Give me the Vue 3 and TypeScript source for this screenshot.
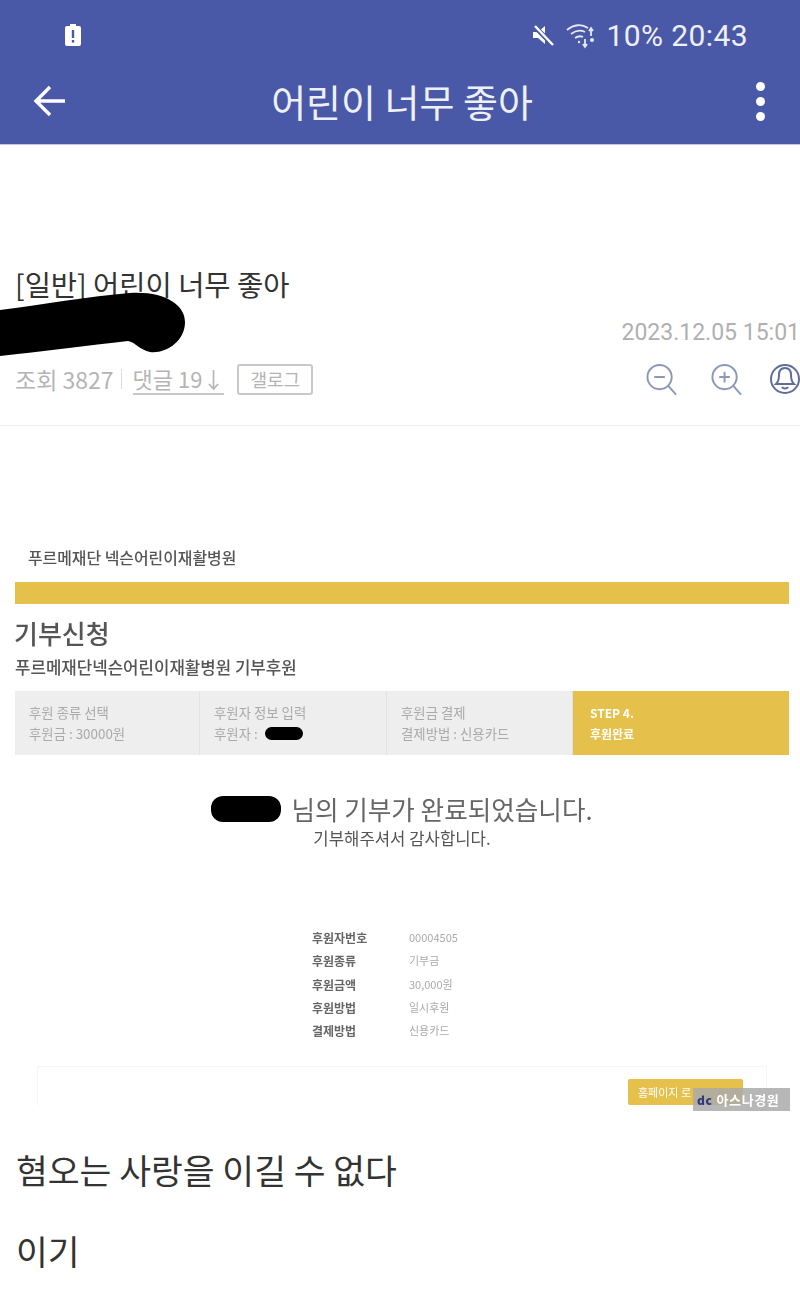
<script setup lang="ts">
const steps = [
  { title: "후원 종류 선택", sub: "후원금 : 30000원" },
  { title: "후원자 정보 입력", sub: "후원자 :" },
  { title: "후원금 결제", sub: "결제방법 : 신용카드" },
];

const receipt = [
  { label: "후원자번호", value: "00004505" },
  { label: "후원종류", value: "기부금" },
  { label: "후원금액", value: "30,000원" },
  { label: "후원방법", value: "일시후원" },
  { label: "결제방법", value: "신용카드" },
];
</script>

<template>
  <div class="page">
    <header class="appbar">
      <div class="status">
        <svg class="battery" width="18" height="24" viewBox="0 0 18 24">
          <path d="M6 1h6v2h3a2 2 0 0 1 2 2v16a2 2 0 0 1-2 2H3a2 2 0 0 1-2-2V5a2 2 0 0 1 2-2h3z" fill="#fff" />
          <rect x="7.8" y="7" width="2.4" height="8" fill="#4a58a8" />
          <rect x="7.8" y="17" width="2.4" height="2.6" fill="#4a58a8" />
        </svg>
        <div class="status-right">
          <svg width="24" height="24" viewBox="0 0 24 24">
            <path d="M2 9h5l7-6v18l-7-6H2z" fill="#fff" />
            <path d="M3 3l19 19" stroke="#4a58a8" stroke-width="5" />
            <path d="M4 3l18 19" stroke="#fff" stroke-width="2.4" />
          </svg>
          <svg width="32" height="28" viewBox="0 0 32 28" fill="none" stroke="#e6e8f4" stroke-width="1.8">
            <path d="M2 9c7-6 15-6 21-2" />
            <path d="M6 13c5-4 10-4 14-2" />
            <path d="M10 17c3-2 6-2 8-1" />
            <circle cx="14" cy="21" r="1.2" fill="#e6e8f4" stroke="none" />
            <path d="M20 26v-8M26 15v-8M24 10l2-3 2 3M18 23l2 3 2-3" />
            <circle cx="27" cy="19" r="2" fill="#e6e8f4" stroke="none" />
          </svg>
          <span class="status-text">10% 20:43</span>
        </div>
      </div>
      <div class="toolbar">
        <svg width="36" height="36" viewBox="0 0 36 36" fill="none" stroke="#fff" stroke-width="3.4">
          <path d="M33 18H4M18 4L4 18l14 14" />
        </svg>
        <h1>어린이 너무 좋아</h1>
        <span class="dots"><i></i><i></i><i></i></span>
      </div>
    </header>

    <section class="post-head">
      <h2>[일반] 어린이 너무 좋아</h2>
      <div class="date">2023.12.05 15:01</div>
      <div class="meta">
        <span class="views">조회 3827</span>
        <span class="sep"></span>
        <span class="comments">댓글 19↓</span>
        <span class="tag">갤로그</span>
        <div class="tools">
          <svg width="34" height="34" viewBox="0 0 34 34" fill="none" stroke="#8c98b8" stroke-width="2">
            <circle cx="15" cy="15" r="12.5" />
            <path d="M9.5 15h11M24 24l8 9" />
          </svg>
          <svg width="34" height="34" viewBox="0 0 34 34" fill="none" stroke="#8c98b8" stroke-width="2">
            <circle cx="15" cy="15" r="12.5" />
            <path d="M9.5 15h11M15 9.5v11M24 24l8 9" />
          </svg>
          <svg class="bell" width="30" height="34" viewBox="0 0 30 34" fill="none" stroke="#5f6d9c" stroke-width="2">
            <circle cx="15" cy="17" r="14" />
            <path d="M15 6c-4 0-6 3-6 7 0 5-1 7-3 9h18c-2-2-3-4-3-9 0-4-2-7-6-7zM12 25c1 2 5 2 6 0" />
          </svg>
        </div>
      </div>
    </section>

    <section class="shot">
      <div class="org">푸르메재단 넥슨어린이재활병원</div>
      <div class="band"></div>
      <div class="shot-title">기부신청</div>
      <div class="shot-sub">푸르메재단넥슨어린이재활병원 기부후원</div>

      <div class="steps">
        <div v-for="step in steps" :key="step.title" class="step">
          <div>{{ step.title }}</div>
          <div class="step-sub">
            {{ step.sub }}
            <i v-if="step.title === '후원자 정보 입력'" class="mark mark-small"></i>
          </div>
        </div>
        <div class="step step-active">
          <div>STEP 4.</div>
          <div>후원완료</div>
        </div>
      </div>

      <div class="done">
        <i class="mark mark-name"></i>
        <span>님의 기부가 완료되었습니다.</span>
      </div>
      <div class="thanks">기부해주셔서 감사합니다.</div>

      <dl class="receipt">
        <template v-for="row in receipt" :key="row.label">
          <dt>{{ row.label }}</dt>
          <dd>{{ row.value }}</dd>
        </template>
      </dl>

      <div class="card">
        <span class="home-btn">홈페이지 로</span>
        <span class="watermark"><b>dc</b>아스나경원</span>
      </div>
    </section>

    <section class="body">
      <p>혐오는 사랑을 이길 수 없다</p>
      <p>이기</p>
    </section>

    <svg class="scribble" width="190" height="70" viewBox="0 290 190 70">
      <path d="M0 310C40 305 90 296 130 293C165 291 185 305 185 322C185 342 165 354 150 352C140 350 135 342 128 341C90 345 40 352 0 356Z" fill="#000" />
    </svg>
  </div>
</template>

<style scoped>
.page {
  position: relative;
  width: 800px;
  height: 1310px;
  overflow: hidden;
  background: #fff;
  font-family: "Noto Sans CJK KR", Roboto, sans-serif;
}

.appbar {
  height: 144px;
  background: #4a58a8;
  border-bottom: 1px solid #c3c8e2;
  color: #eef0f8;
  box-sizing: content-box;
}

.status {
  display: flex;
  align-items: center;
  justify-content: space-between;
  height: 70px;
  padding: 0 52px 0 64px;
}

.status-right {
  display: flex;
  align-items: center;
  gap: 10px;
}

.status-text {
  font-family: Roboto, sans-serif;
  font-size: 30px;
  letter-spacing: 0.4px;
}

.toolbar {
  display: flex;
  align-items: center;
  justify-content: space-between;
  height: 62px;
  padding: 0 32px;
}

.toolbar h1 {
  margin: 0 0 0 -20px;
  font-size: 38px;
  font-weight: 400;
  line-height: 1;
}

.dots {
  display: flex;
  flex-direction: column;
  gap: 6px;
  padding-right: 3px;
}

.dots i {
  width: 9px;
  height: 9px;
  border-radius: 50%;
  background: #fff;
}

.post-head {
  padding: 120px 0 0 15px;
  height: 281px;
  box-sizing: border-box;
  border-bottom: 1px solid #f0f0f0;
}

.post-head h2 {
  margin: 0;
  font-size: 28.5px;
  font-weight: 400;
  line-height: 38px;
  color: #333;
}

.date {
  margin-top: 16px;
  text-align: right;
  font-family: Roboto, sans-serif;
  font-size: 23px;
  line-height: 28px;
  color: #b0b0b0;
}

.meta {
  display: flex;
  align-items: center;
  margin-top: 15px;
  font-size: 22px;
  color: #b4b4b4;
}

.views {
  font-size: 23px;
}

.sep {
  width: 1px;
  height: 20px;
  margin: 0 11px 0 7px;
  background: #ddd;
}

.comments {
  border-bottom: 2px solid #c8c8c8;
  line-height: 30px;
}

.tag {
  margin-left: 13px;
  padding: 0 11px;
  border: 2px solid #c8c8c8;
  border-radius: 3px;
  font-size: 18px;
  line-height: 27px;
}

.tools {
  display: flex;
  gap: 32px;
  margin-left: auto;
  width: 155px;
  flex-shrink: 0;
  align-items: center;
}

.bell {
  margin-left: -5px;
  flex-shrink: 0;
}

.shot {
  padding: 120px 11px 0 15px;
  height: 680px;
  box-sizing: border-box;
  filter: blur(0.6px);
  color: #555;
}

.org {
  padding-left: 13px;
  font-size: 15.9px;
  line-height: 24px;
  font-weight: 500;
}

.band {
  height: 22px;
  margin-top: 12px;
  background: #e5c04a;
}

.shot-title {
  margin-top: 11px;
  font-size: 26px;
  line-height: 36px;
  font-weight: 500;
  margin-left: -1px;
}

.shot-sub {
  margin-top: 4px;
  font-size: 16.8px;
  line-height: 24px;
  font-weight: 500;
}

.steps {
  display: grid;
  grid-template-columns: 185px 187px 186px 216px;
  height: 64px;
  margin-top: 12px;
  background: #eeeeee;
}

.step {
  padding: 11px 0 0 14px;
  font-size: 13.4px;
  line-height: 21px;
  color: #aaa;
  border-right: 1px solid #e2e2e2;
}

.step-sub {
  display: flex;
  align-items: center;
  gap: 7px;
}

.step-active {
  padding-left: 17px;
  background: #e5c04a;
  color: #fff;
  font-weight: 700;
  font-size: 12px;
  border-right: 0;
}

.mark {
  display: inline-block;
  background: #000;
  border-radius: 10px;
}

.mark-small {
  width: 38px;
  height: 13px;
}

.done {
  display: flex;
  align-items: center;
  justify-content: center;
  gap: 10px;
  margin-top: 36px;
  font-size: 25.6px;
  line-height: 36px;
  color: #666;
}

.mark-name {
  width: 70px;
  height: 26px;
  border-radius: 12px;
}

.thanks {
  text-align: center;
  font-size: 16.7px;
  line-height: 22px;
  color: #555;
}

.receipt {
  display: grid;
  grid-template-columns: 97px auto;
  grid-auto-rows: 23.3px;
  margin: 77px 0 0 297px;
  font-size: 12px;
  line-height: 23px;
}

.receipt dt {
  font-weight: 700;
  color: #666;
}

.receipt dd {
  margin: 0;
  font-size: 11px;
  color: #aaa;
}

.card {
  position: relative;
  height: 39px;
  margin: 24px 22px 0 22px;
  border: 1px solid #f5f5f5;
  border-bottom: 0;
}

.home-btn {
  position: absolute;
  top: 12px;
  left: 590px;
  width: 115px;
  height: 26px;
  padding-left: 10px;
  box-sizing: border-box;
  background: #e5c04a;
  border-radius: 2px;
  color: #fff;
  font-size: 11px;
  line-height: 26px;
  white-space: nowrap;
  overflow: hidden;
}

.watermark {
  position: absolute;
  top: 21px;
  left: 655px;
  width: 97px;
  height: 23px;
  display: flex;
  align-items: center;
  gap: 4px;
  padding-left: 4px;
  box-sizing: border-box;
  background: rgba(170, 170, 170, 0.85);
  color: #fff;
  font-size: 13px;
  font-weight: 700;
  letter-spacing: 0.6px;
  white-space: nowrap;
}

.watermark b {
  color: #2b3a80;
  font-size: 12px;
}

.body {
  padding: 38px 0 0 16px;
  color: #333;
  font-size: 34.6px;
}

.body p {
  margin: 0 0 31px;
  line-height: 50px;
}

.scribble {
  position: absolute;
  top: 290px;
  left: 0;
}
</style>
